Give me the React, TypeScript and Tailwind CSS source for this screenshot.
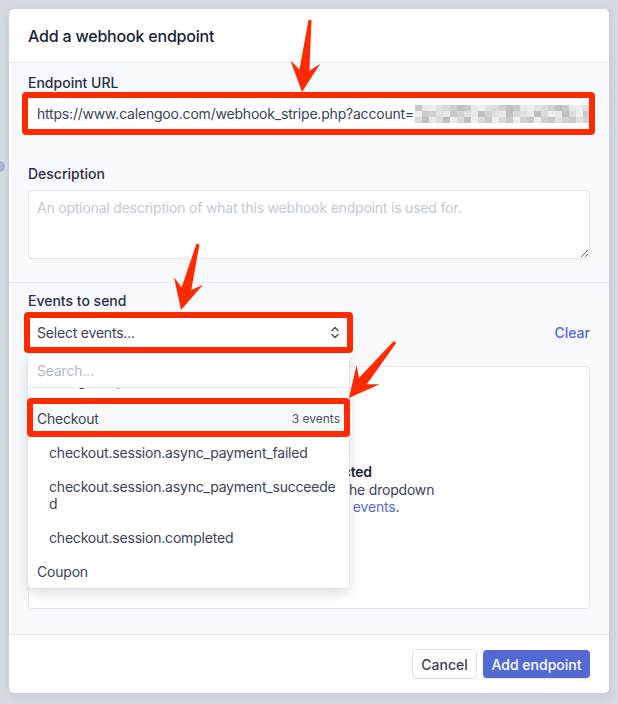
import React from "react";

const mosaicShades = [
  "bg-[#c4c4c4]",
  "bg-[#d6d6d6]",
  "bg-[#e6e6e6]",
  "bg-[#cdcdcd]",
  "bg-[#ececec]",
  "bg-[#bababa]",
  "bg-[#dedede]",
];

const events = [
  { label: "charge.dispute.funds_reinstated", nested: true, partial: true },
  { label: "Checkout", count: "3 events", active: true },
  { label: "checkout.session.async_payment_failed", nested: true },
  { label: "checkout.session.async_payment_succeeded", nested: true },
  { label: "checkout.session.completed", nested: true },
  { label: "Coupon" },
];

// tapered annotation arrow, tail -> tip
function arrowPoints(tx: number, ty: number, hx: number, hy: number) {
  const dx = hx - tx;
  const dy = hy - ty;
  const len = Math.hypot(dx, dy);
  const ux = dx / len;
  const uy = dy / len;
  const nx = -uy;
  const ny = ux;
  const L = 30;
  const W = 15;
  const neck = 22;
  const sw = 5;
  const tw = 1.5;
  const bx = hx - ux * L;
  const by = hy - uy * L;
  const kx = hx - ux * neck;
  const ky = hy - uy * neck;
  const p = (x: number, y: number) => `${x.toFixed(1)},${y.toFixed(1)}`;
  return [
    p(tx + nx * tw, ty + ny * tw),
    p(kx + nx * sw, ky + ny * sw),
    p(bx + nx * W, by + ny * W),
    p(hx, hy),
    p(bx - nx * W, by - ny * W),
    p(kx - nx * sw, ky - ny * sw),
    p(tx - nx * tw, ty - ny * tw),
  ].join(" ");
}

function Mosaic() {
  const cells = [];
  for (let r = 0; r < 3; r++) {
    for (let c = 0; c < 25; c++) {
      const shade = mosaicShades[(c * 37 + r * 11 + ((c * r) % 5)) % mosaicShades.length];
      cells.push(<span key={`${r}-${c}`} className={`block h-[6px] w-[7px] ${shade}`} />);
    }
  }
  return <span className="ml-px grid shrink-0 grid-cols-[repeat(25,7px)] opacity-90">{cells}</span>;
}

function RedBox({ className }: { className: string }) {
  return <div className={`pointer-events-none absolute rounded-[4px] border-[6px] border-[#ff2a00] ${className}`} />;
}

export default function App() {
  return (
    <div className="relative h-[704px] w-[618px] overflow-hidden bg-[#d5d9e0] p-[9px] font-['Inter',sans-serif] text-[14px] tracking-[-0.2px] text-[#3c4257]">
      <div className="absolute -left-[6px] top-[161px] h-[11px] w-[11px] rounded-full bg-[#a9b5dc]" />

      <div className="relative w-[600px] rounded-[5px] bg-white shadow-[0_2px_8px_rgba(60,66,87,0.12)]">
        <div className="flex h-[54px] items-center border-b border-[#e3e8ee] px-[19px]">
          <h1 className="text-[16px] font-[450] text-[#1a1f36]">Add a webhook endpoint</h1>
        </div>

        <div className="bg-[#f7f9fc]">
          <div className="px-[19px] pb-[23px] pt-[10px]">
            <div className="font-medium leading-[20px] tracking-normal text-[#2a2f45]">Endpoint URL</div>
            <div className="relative mt-[5px] flex h-[32px] items-center whitespace-nowrap rounded-[4px] bg-white pl-[9px]">
              <span className="leading-[20px]">https://www.calengoo.com/webhook_stripe.php?account=</span>
              <Mosaic />
              <RedBox className="-bottom-[5px] -left-[6px] -right-[5px] -top-[6px]" />
            </div>

            <div className="mt-[34px] font-medium leading-[20px] tracking-normal text-[#2a2f45]">Description</div>
            <textarea
              className="mt-[6px] block h-[69px] w-full rounded-[4px] border border-[#e3e8ee] bg-white px-[8px] pt-[7px] leading-[20px] outline-none placeholder:text-[#c1c8d2]"
              placeholder="An optional description of what this webhook endpoint is used for."
            />
          </div>

          <div className="border-t border-[#e3e8ee] px-[19px] pb-[25px] pt-[8px]">
            <div className="font-medium leading-[20px] tracking-normal text-[#2a2f45]">Events to send</div>
            <div className="mt-[7px] flex items-center justify-between">
              <div className="relative">
                <div className="flex h-[28px] w-[320px] items-center justify-between rounded-[4px] bg-white pl-[9px] pr-[9px]">
                  <span>Select events...</span>
                  <svg width="8" height="13" viewBox="0 0 8 13" fill="none" stroke="#4f566b" strokeWidth="1.5" strokeLinecap="round" strokeLinejoin="round">
                    <path d="M1 4.5 L4 1.5 L7 4.5" />
                    <path d="M1 8.5 L4 11.5 L7 8.5" />
                  </svg>
                </div>
                <RedBox className="-bottom-[7px] -left-[4px] -right-[5px] -top-[6px]" />

                <div className="absolute left-0 top-[36px] z-20 w-[321px] rounded-[4px] bg-white shadow-[0_0_0_1px_rgba(60,66,87,0.06),0_5px_14px_rgba(60,66,87,0.18)]">
                  <div className="relative z-10 flex h-[34px] items-center rounded-t-[4px] border-b border-[#e3e8ee] bg-white pl-[9px] text-[#b3bac5]">
                    Search...
                  </div>
                  <div className="-mt-[21px]">
                    {events.map((e) => (
                      <div
                        key={e.label}
                        className={`relative flex justify-between break-all pr-[9px] leading-[17px] ${e.partial ? "pb-[12.5px] pt-[4.5px]" : "py-[8.5px]"} ${e.nested ? "pl-[21px]" : "pl-[9px]"} ${e.active ? "bg-[#f6f8fa]" : ""}`}
                      >
                        <span>{e.label}</span>
                        {e.count && <span className="text-[12px] tracking-normal text-[#4f566b]">{e.count}</span>}
                        {e.active && <RedBox className="-bottom-[1.5px] -left-px -right-px -top-[3.5px]" />}
                      </div>
                    ))}
                  </div>
                </div>
              </div>
              <span className="font-medium tracking-normal text-[#5469d4]">Clear</span>
            </div>

            <div className="mt-[20px] flex h-[243px] flex-col items-center justify-center rounded-[4px] border border-[#e3e8ee] bg-white pt-[4px] text-center leading-[17.5px]">
              <div className="font-semibold text-[#1a1f36]">No events selected</div>
              <div>Search for events or use the dropdown</div>
              <div>
                Or you can select all <span className="text-[#5469d4]">events</span>.
              </div>
            </div>
          </div>
        </div>

        <div className="flex h-[59px] items-center justify-end gap-[7px] rounded-b-[5px] border-t border-[#e3e8ee] px-[19px]">
          <button className="flex h-[28px] w-[63px] items-center justify-center rounded-[4px] bg-white font-medium tracking-normal text-[#3c4257] shadow-[0_0_0_1px_rgba(60,66,87,0.16),0_1px_1px_rgba(0,0,0,0.08)]">
            Cancel
          </button>
          <button className="flex h-[28px] w-[107px] items-center justify-center rounded-[4px] bg-[#5469d4] font-medium tracking-normal text-white shadow-[0_1px_1px_rgba(0,0,0,0.12)]">
            Add endpoint
          </button>
        </div>
      </div>

      <svg className="pointer-events-none absolute left-0 top-0 z-50" width="618" height="704">
        <polygon points={arrowPoints(310, 20, 302, 92)} fill="#ff2a00" />
        <polygon points={arrowPoints(198, 244, 181, 310)} fill="#ff2a00" />
        <polygon points={arrowPoints(395, 342, 349, 398)} fill="#ff2a00" />
      </svg>
    </div>
  );
}
